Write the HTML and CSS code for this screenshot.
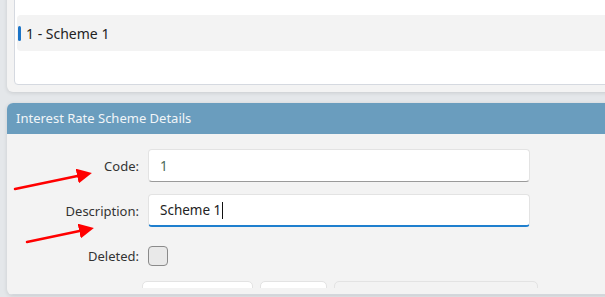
FILE: index.html
```html
<!DOCTYPE html>
<html lang="en">
  <head>
    <meta charset="UTF-8" />
    <title>Interest Rate Schemes</title>
    <link rel="stylesheet" href="styles.css">
  </head>
  <body>
    <div class="page">
      <!-- Scheme list -->
      <div class="card list-card">
        <div class="list-inner">
          <div class="list-item">
            <span class="marker"></span>
            <span>1 - Scheme 1</span>
          </div>
        </div>
      </div>

      <!-- Details -->
      <div class="card details-card">
        <div class="details-header">Interest Rate Scheme Details</div>
        <div class="details-body">
          <div class="form-grid">
            <label class="label" for="code">Code:</label>
            <div class="input code-input" id="code">1</div>

            <label class="label" for="desc">Description:</label>
            <div class="input input-focus" id="desc">Scheme 1<span class="caret"></span></div>

            <label class="label spaced">Deleted:</label>
            <div class="spaced"><span class="checkbox"></span></div>
          </div>
          <div class="button-row">
            <div class="btn btn-wide"></div>
            <div class="btn btn-small"></div>
            <div class="btn btn-flat"></div>
          </div>
        </div>
        <div class="details-foot"></div>
      </div>

      <!-- Annotation arrows -->
      <svg class="arrows" width="605" height="297" viewBox="0 0 605 297">
        <defs>
          <marker id="head" markerWidth="6" markerHeight="6" refX="4" refY="3" orient="auto" markerUnits="strokeWidth">
            <path d="M0,0 L6,3 L0,6 Z" fill="#f00" />
          </marker>
        </defs>
        <line x1="15" y1="189" x2="87" y2="174" stroke="#f00" stroke-width="2.5" stroke-linecap="round" marker-end="url(#head)" />
        <line x1="27" y1="242" x2="89" y2="229" stroke="#f00" stroke-width="2.5" stroke-linecap="round" marker-end="url(#head)" />
      </svg>
    </div>
  </body>
</html>
```

FILE: styles.css
```css
html,
body {
  margin: 0;
  overflow: hidden;
}
body {
  background-color: #e4e7ea;
  font-family: "Noto Sans", "Open Sans", sans-serif;
  font-size: 13px;
  color: #222;
}
.page {
  position: relative;
  width: 605px;
  height: 297px;
  overflow: hidden;
}
.card {
  background-color: #f3f3f3;
  border-radius: 6px;
  box-shadow: 0 1px 4px rgba(0, 0, 0, 0.12);
  width: 640px;
  margin-left: 7px;
}
.list-card {
  margin-top: -20px;
  padding: 7px;
}
.list-inner {
  background-color: #ffffff;
  border: 1px solid #d5d9e0;
  border-radius: 4px;
  padding: 27px 0 33px 2px;
}
.list-item {
  display: flex;
  align-items: center;
  gap: 5px;
  height: 36px;
  background-color: #f3f3f3;
  border-radius: 4px;
  padding-left: 1px;
  font-size: 14px;
}
.marker {
  width: 3px;
  height: 15px;
  border-radius: 2px;
  background-color: #1b74c7;
}
.details-card {
  margin-top: 11px;
  overflow: hidden;
}
.details-header {
  height: 31px;
  line-height: 31px;
  padding-left: 9px;
  background-color: #6a9dbe;
  color: #f1f5f8;
  font-size: 13px;
}
.details-body {
  height: 154px;
  overflow: hidden;
}
.form-grid {
  display: grid;
  grid-template-columns: 132px 382px;
  column-gap: 9px;
  row-gap: 12px;
  align-items: center;
  padding-top: 15px;
}
.label {
  text-align: right;
  color: #333;
  font-size: 13px;
}
.spaced {
  margin-top: 7px;
}
.input {
  height: 33px;
  box-sizing: border-box;
  background-color: #ffffff;
  border: 1px solid #e3e3e3;
  border-bottom: 1px solid #9a9a9a;
  border-radius: 4px;
  padding-left: 11px;
  display: flex;
  align-items: center;
  font-size: 13.5px;
}
.code-input {
  color: #4d6a5c;
}
.input-focus {
  border-bottom: 2px solid #1f7fce;
  color: #222;
}
.caret {
  display: inline-block;
  width: 1px;
  height: 17px;
  background-color: #111;
  margin-left: 1px;
}
.checkbox {
  display: block;
  width: 20px;
  height: 20px;
  box-sizing: border-box;
  border: 1px solid #8a8a8a;
  border-radius: 4px;
  background-color: #e9e9e9;
}
.button-row {
  display: flex;
  gap: 7px;
  margin: 15px 0 0 135px;
}
.btn {
  height: 30px;
  box-sizing: border-box;
  border: 1px solid #e3e3e3;
  border-radius: 5px;
  background-color: #ffffff;
}
.btn-wide {
  width: 111px;
}
.btn-small {
  width: 67px;
}
.btn-flat {
  width: 204px;
  background-color: #f3f3f3;
}
.details-foot {
  height: 6px;
  border-bottom: 1px solid #d3d7dc;
}
.arrows {
  position: absolute;
  left: 0;
  top: 0;
}
```
